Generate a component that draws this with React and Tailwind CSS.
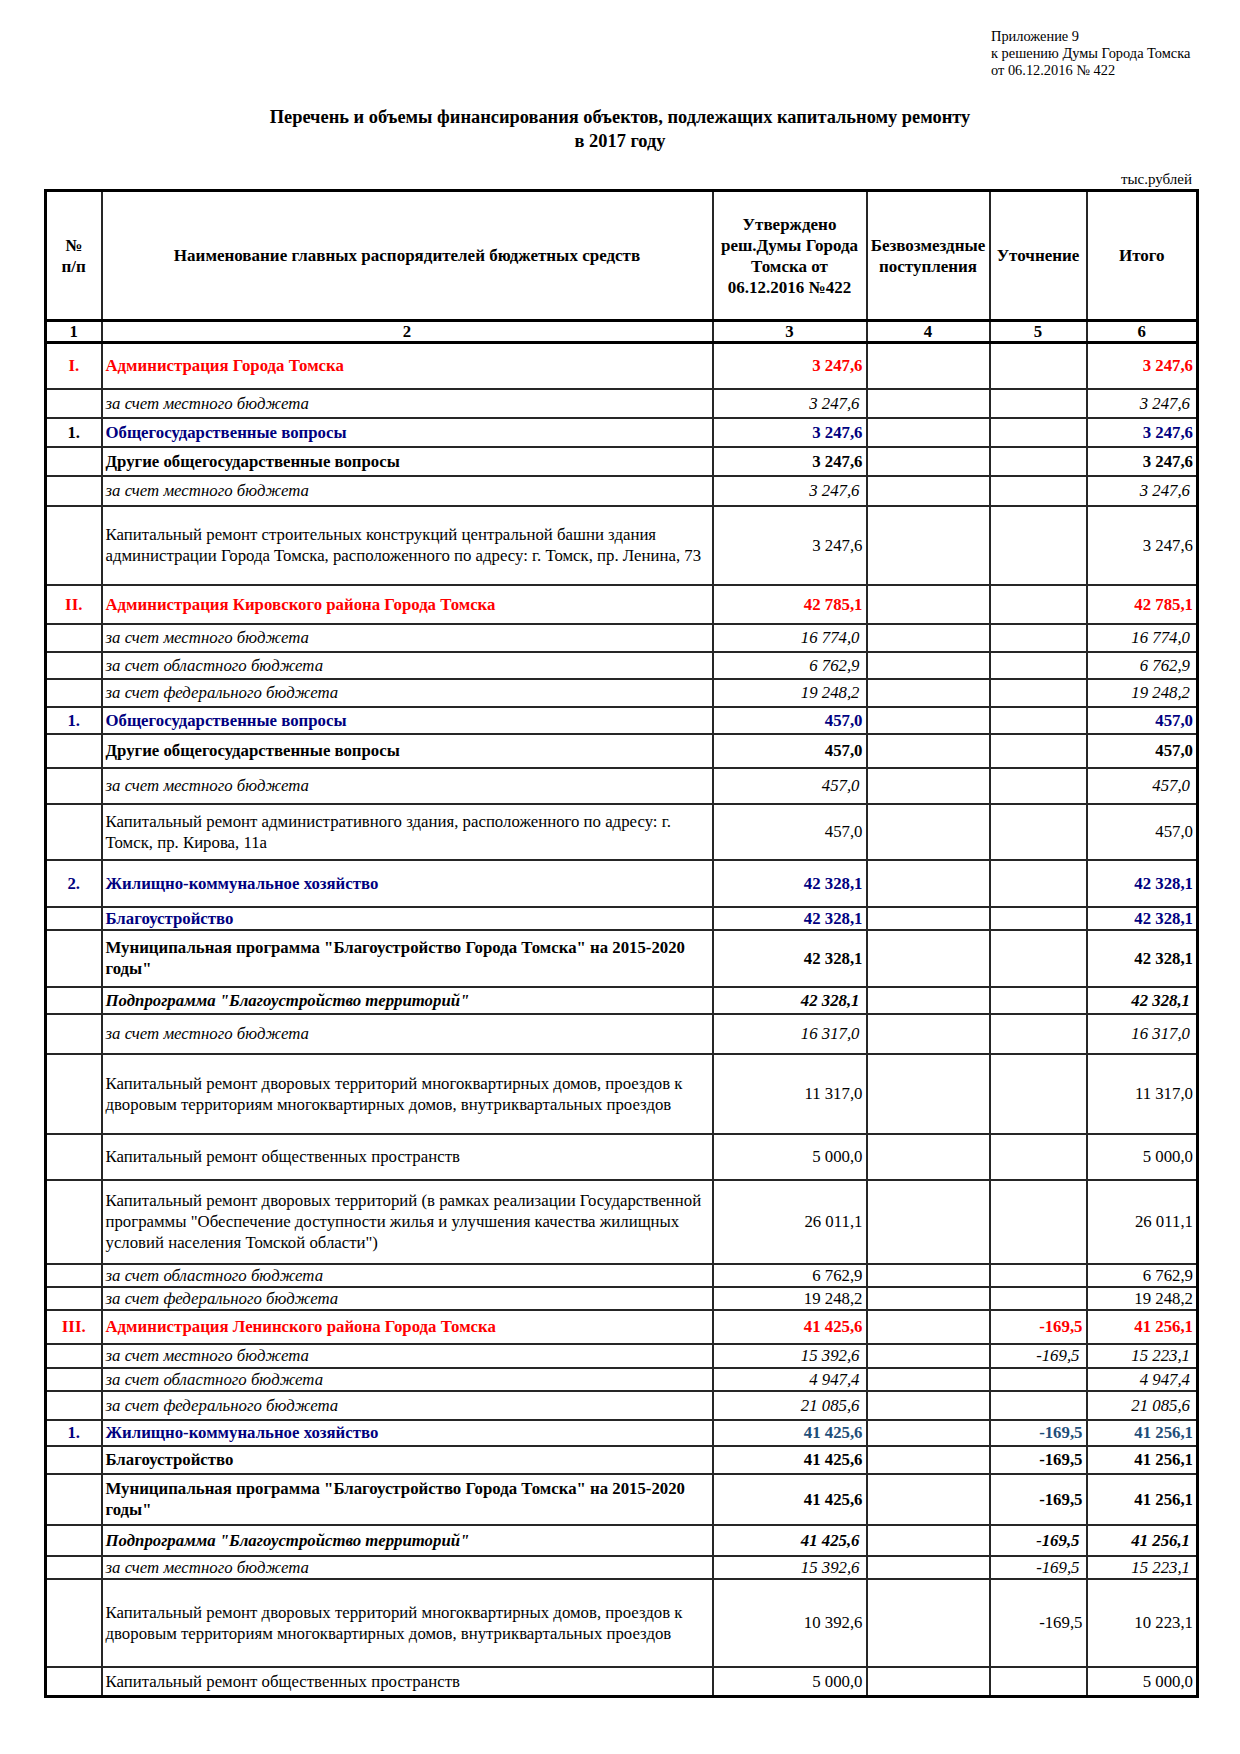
import React from 'react';

const tone = {
  red: 'text-[#ff0000] font-bold',
  navy: 'text-[#000080] font-bold',
  steel: 'text-[#1f4e79] font-bold',
  black: 'font-bold',
  bold: 'font-bold',
  bi: 'font-bold italic',
  it: 'italic',
  reg: '',
};

const rows = [
  { n: 'I.', nc: 'red', t: 'Администрация Города Томска', tc: 'red', v: ['3 247,6', '', '3 247,6'], vc: 'red', h: 'h-[46px]' },
  { t: 'за счет местного бюджета', tc: 'it', v: ['3 247,6', '', '3 247,6'], vc: 'it', h: 'h-[29px]' },
  { n: '1.', nc: 'black', t: 'Общегосударственные вопросы', tc: 'navy', v: ['3 247,6', '', '3 247,6'], vc: 'navy', h: 'h-[29px]' },
  { t: 'Другие общегосударственные вопросы', tc: 'bold', v: ['3 247,6', '', '3 247,6'], vc: 'bold', h: 'h-[29px]' },
  { t: 'за счет местного бюджета', tc: 'it', v: ['3 247,6', '', '3 247,6'], vc: 'it', h: 'h-[30px]' },
  { t: 'Капитальный ремонт строительных конструкций центральной башни здания администрации Города Томска, расположенного по адресу: г. Томск, пр. Ленина, 73', tc: 'reg', v: ['3 247,6', '', '3 247,6'], vc: 'reg', h: 'h-[79px]' },

  { n: 'II.', nc: 'red', t: 'Администрация Кировского района Города Томска', tc: 'red', v: ['42 785,1', '', '42 785,1'], vc: 'red', h: 'h-[39px]' },
  { t: 'за счет местного бюджета', tc: 'it', v: ['16 774,0', '', '16 774,0'], vc: 'it', h: 'h-[28px]' },
  { t: 'за счет областного бюджета', tc: 'it', v: ['6 762,9', '', '6 762,9'], vc: 'it', h: 'h-[27px]' },
  { t: 'за счет федерального бюджета', tc: 'it', v: ['19 248,2', '', '19 248,2'], vc: 'it', h: 'h-[28px]' },
  { n: '1.', nc: 'navy', t: 'Общегосударственные вопросы', tc: 'navy', v: ['457,0', '', '457,0'], vc: 'navy', h: 'h-[27px]' },
  { t: 'Другие общегосударственные вопросы', tc: 'bold', v: ['457,0', '', '457,0'], vc: 'bold', h: 'h-[34px]' },
  { t: 'за счет местного бюджета', tc: 'it', v: ['457,0', '', '457,0'], vc: 'it', h: 'h-[36px]' },
  { t: 'Капитальный ремонт административного здания, расположенного по адресу: г. Томск, пр. Кирова, 11а', tc: 'reg', v: ['457,0', '', '457,0'], vc: 'reg', h: 'h-[56px]' },
  { n: '2.', nc: 'navy', t: 'Жилищно-коммунальное хозяйство', tc: 'navy', v: ['42 328,1', '', '42 328,1'], vc: 'navy', h: 'h-[47px]' },
  { t: 'Благоустройство', tc: 'navy', v: ['42 328,1', '', '42 328,1'], vc: 'navy', h: 'h-[22px]' },
  { t: 'Муниципальная программа "Благоустройство Города Томска" на 2015-2020 годы"', tc: 'bold', v: ['42 328,1', '', '42 328,1'], vc: 'bold', h: 'h-[57px]' },
  { t: 'Подпрограмма "Благоустройство территорий"', tc: 'bi', v: ['42 328,1', '', '42 328,1'], vc: 'bi', h: 'h-[27px]' },
  { t: 'за счет местного бюджета', tc: 'it', v: ['16 317,0', '', '16 317,0'], vc: 'it', h: 'h-[40px]' },
  { t: 'Капитальный ремонт дворовых территорий многоквартирных домов, проездов к дворовым территориям многоквартирных домов, внутриквартальных проездов', tc: 'reg', v: ['11 317,0', '', '11 317,0'], vc: 'reg', h: 'h-[80px]' },
  { t: 'Капитальный ремонт общественных пространств', tc: 'reg', v: ['5 000,0', '', '5 000,0'], vc: 'reg', h: 'h-[46px]' },
  { t: 'Капитальный ремонт дворовых территорий (в рамках реализации Государственной программы "Обеспечение доступности жилья и улучшения качества жилищных условий населения Томской области")', tc: 'reg', v: ['26 011,1', '', '26 011,1'], vc: 'reg', h: 'h-[84px]' },
  { t: 'за счет областного бюджета', tc: 'it', v: ['6 762,9', '', '6 762,9'], vc: 'reg', h: 'h-[21px]' },
  { t: 'за счет федерального бюджета', tc: 'it', v: ['19 248,2', '', '19 248,2'], vc: 'reg', h: 'h-[21px]' },

  { n: 'III.', nc: 'red', t: 'Администрация Ленинского района Города Томска', tc: 'red', v: ['41 425,6', '-169,5', '41 256,1'], vc: 'red', h: 'h-[34px]' },
  { t: 'за счет местного бюджета', tc: 'it', v: ['15 392,6', '-169,5', '15 223,1'], vc: 'it', h: 'h-[24px]' },
  { t: 'за счет областного бюджета', tc: 'it', v: ['4 947,4', '', '4 947,4'], vc: 'it', h: 'h-[22px]' },
  { t: 'за счет федерального бюджета', tc: 'it', v: ['21 085,6', '', '21 085,6'], vc: 'it', h: 'h-[29px]' },
  { n: '1.', nc: 'navy', t: 'Жилищно-коммунальное хозяйство', tc: 'navy', v: ['41 425,6', '-169,5', '41 256,1'], vc: 'steel', h: 'h-[26px]' },
  { t: 'Благоустройство', tc: 'bold', v: ['41 425,6', '-169,5', '41 256,1'], vc: 'bold', h: 'h-[28px]' },
  { t: 'Муниципальная программа "Благоустройство Города Томска" на 2015-2020 годы"', tc: 'bold', v: ['41 425,6', '-169,5', '41 256,1'], vc: 'bold', h: 'h-[51px]' },
  { t: 'Подпрограмма "Благоустройство территорий"', tc: 'bi', v: ['41 425,6', '-169,5', '41 256,1'], vc: 'bi', h: 'h-[31px]' },
  { t: 'за счет местного бюджета', tc: 'it', v: ['15 392,6', '-169,5', '15 223,1'], vc: 'it', h: 'h-[23px]' },
  { t: 'Капитальный ремонт дворовых территорий многоквартирных домов, проездов к дворовым территориям многоквартирных домов, внутриквартальных проездов', tc: 'reg', v: ['10 392,6', '-169,5', '10 223,1'], vc: 'reg', h: 'h-[88px]' },
  { t: 'Капитальный ремонт общественных пространств', tc: 'reg', v: ['5 000,0', '', '5 000,0'], vc: 'reg', h: 'h-[30px]' },
];

const cell = 'border-2 border-[#262626] p-0 align-middle';

function Num({ value, kind }) {
  const italic = kind === 'it' || kind === 'bi';
  return (
    <td className={`${cell} text-right ${italic ? 'pr-[6px]' : 'pr-[3px]'} ${tone[kind]}`}>{value}</td>
  );
}

export default function App() {
  return (
    <div className="w-[1240px] min-h-[1754px] bg-white text-black font-['Liberation_Serif','Times_New_Roman',serif]">
      {/* appendix note */}
      <div className="pt-[28px] pl-[991px] text-[14.4px] leading-[17px]">
        <div>Приложение 9</div>
        <div>к решению Думы Города Томска</div>
        <div>от 06.12.2016 № 422</div>
      </div>

      <h1 className="mt-[26px] text-center text-[18.4px] leading-[24px] font-bold">
        <div>Перечень и объемы финансирования объектов, подлежащих капитальному ремонту</div>
        <div>в 2017 году</div>
      </h1>

      <div className="mt-[18px] pr-[48px] text-right text-[15px] leading-[16px]">тыс.рублей</div>

      <div className="pl-[44px] mt-[2px]">
        <table className="table-fixed border-collapse border-[3px] border-black w-[1152px] text-[16.8px] leading-[21px]">
          <colgroup>
            <col className="w-[56px]" />
            <col className="w-[611px]" />
            <col className="w-[154px]" />
            <col className="w-[123px]" />
            <col className="w-[97px]" />
            <col className="w-[111px]" />
          </colgroup>
          <thead>
            <tr className="h-[130px] font-bold text-center text-[17px]">
              <th className={cell}>№<br />п/п</th>
              <th className={cell}>Наименование главных распорядителей бюджетных средств</th>
              <th className={cell}>Утверждено<br />реш.Думы Города<br />Томска от<br />06.12.2016 №422</th>
              <th className={cell}>Безвозмездные<br />поступления</th>
              <th className={cell}>Уточнение</th>
              <th className={cell}>Итого</th>
            </tr>
            <tr className="h-[22px] font-bold text-center">
              {['1', '2', '3', '4', '5', '6'].map((c) => (
                <th key={c} className="border-2 border-y-[3px] border-[#262626] border-y-black p-0 leading-[18px]">{c}</th>
              ))}
            </tr>
          </thead>
          <tbody>
            {rows.map((r, i) => (
              <tr key={i} className={r.h}>
                <td className={`${cell} text-center ${r.nc ? tone[r.nc] : ''}`}>{r.n}</td>
                <td className={`${cell} pl-[3px] pr-[2px] text-left ${tone[r.tc]}`}>{r.t}</td>
                <Num value={r.v[0]} kind={r.vc} />
                <td className={cell}></td>
                <Num value={r.v[1]} kind={r.vc} />
                <Num value={r.v[2]} kind={r.vc} />
              </tr>
            ))}
          </tbody>
        </table>
      </div>
    </div>
  );
}
